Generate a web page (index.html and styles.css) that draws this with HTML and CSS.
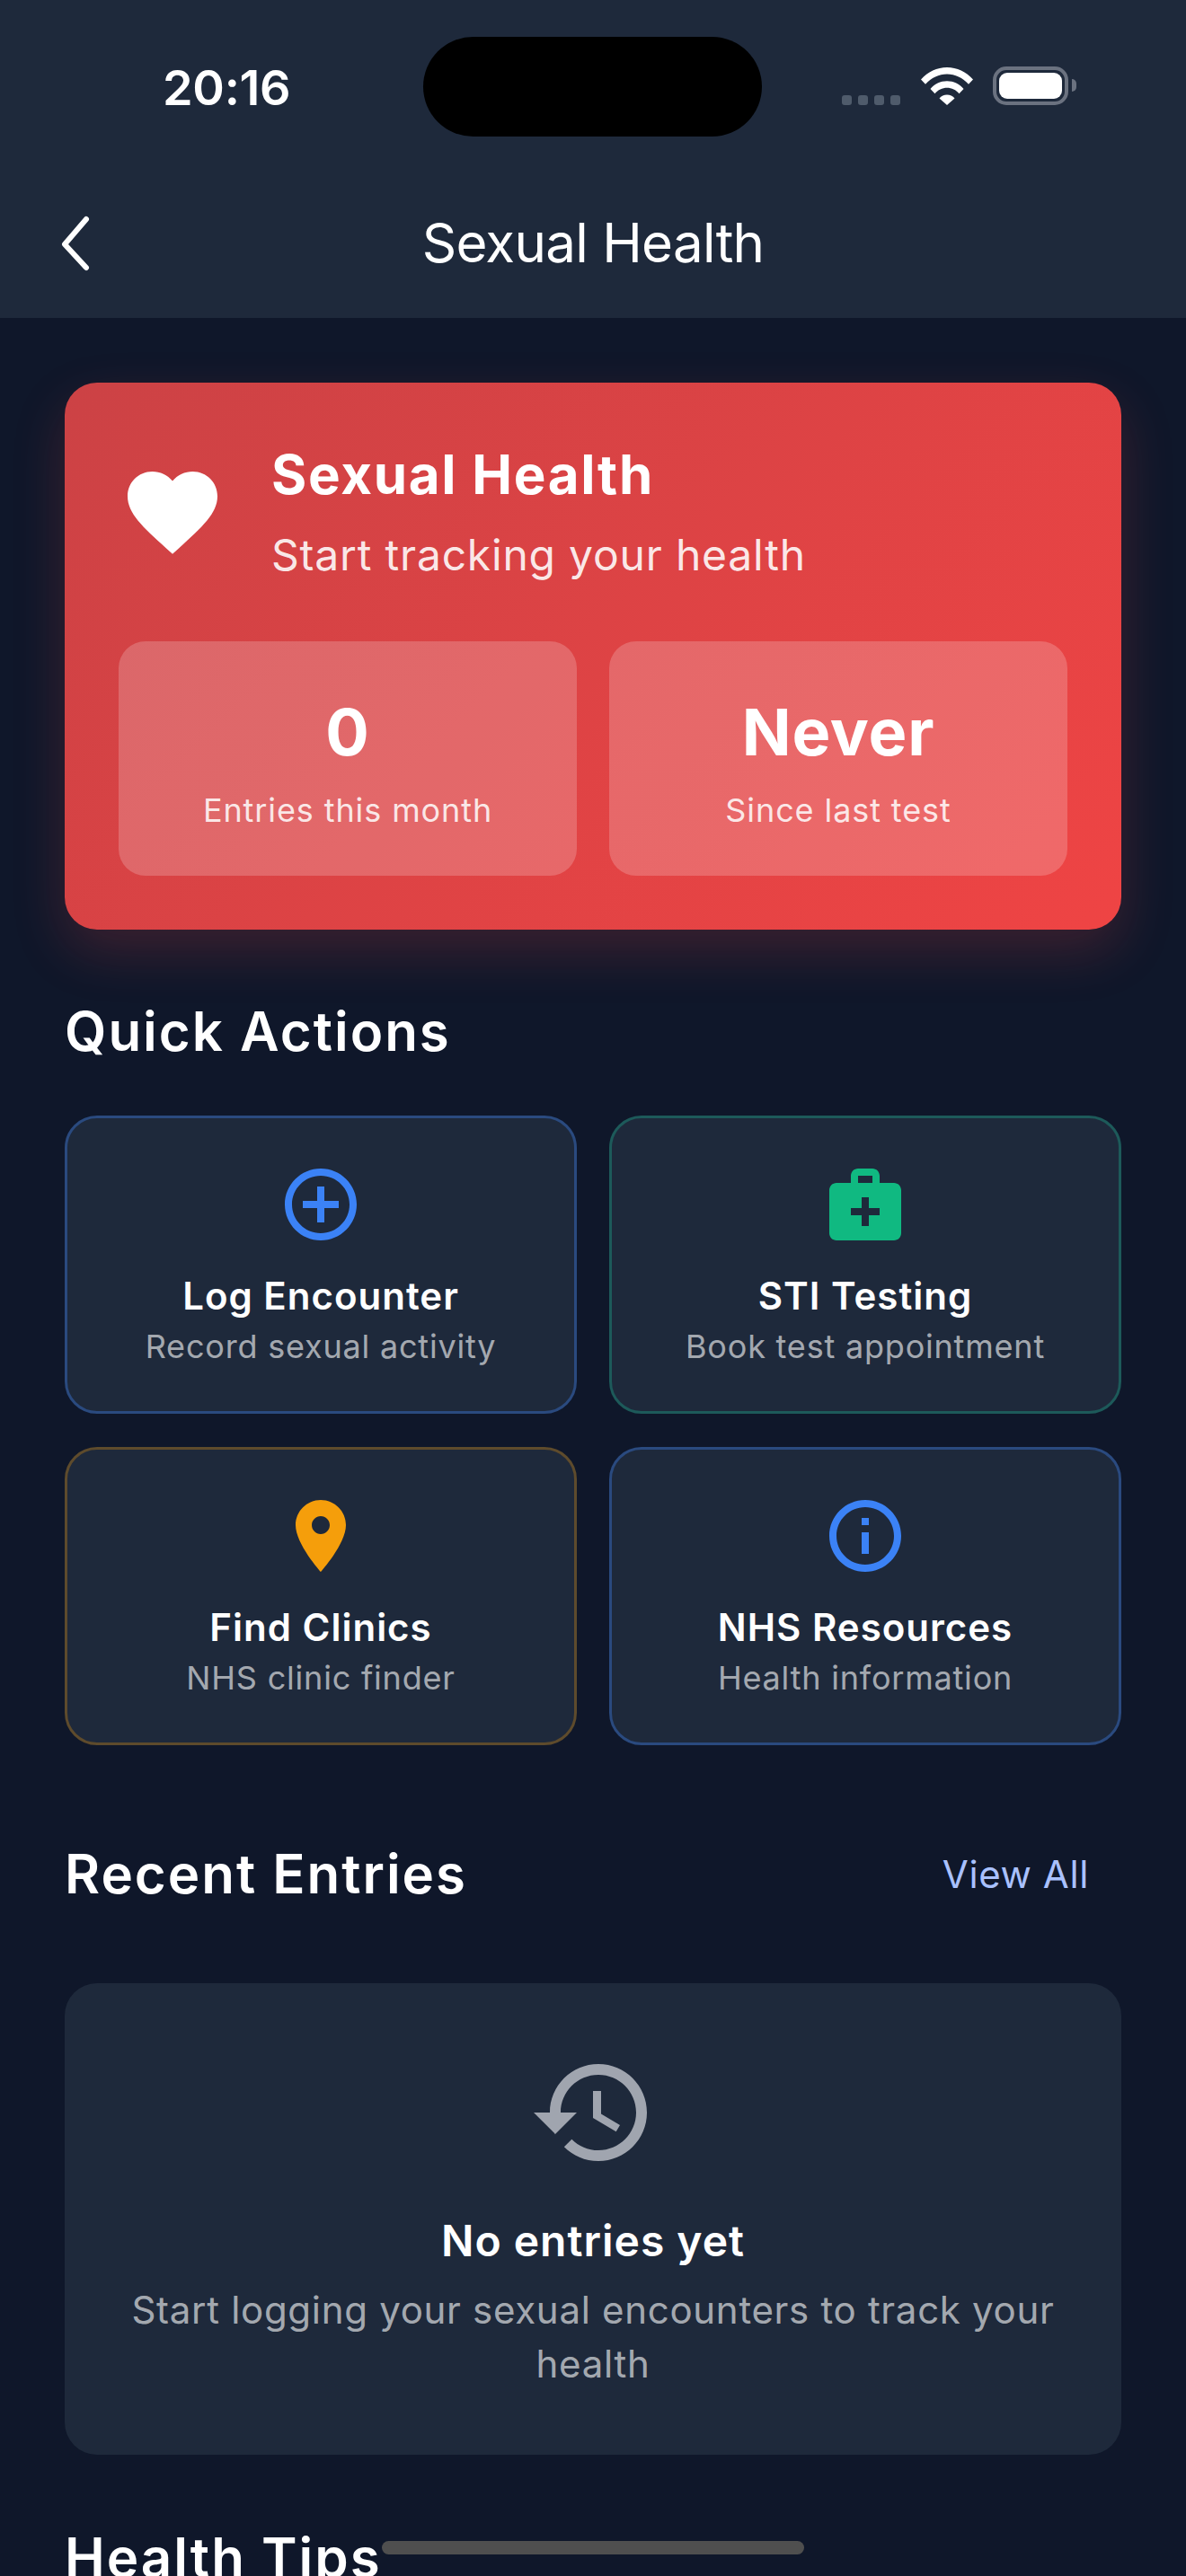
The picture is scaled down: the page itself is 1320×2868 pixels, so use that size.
FILE: index.html
```html
<!DOCTYPE html>
<html lang="en">
<head>
    <meta charset="UTF-8">
    <meta name="viewport" content="width=device-width, initial-scale=1.0">
    <title>Sexual Health</title>
    <link rel="stylesheet" href="styles.css">
</head>
<body>

    <header class="header">
        <div class="status-bar">
            <span class="time">20:16</span>
            <div class="status-icons">
                <div class="signal"><i></i><i></i><i></i><i></i></div>
                <svg class="wifi" viewBox="0 0 58 42">
                    <path fill="#fff" d="M0 13.500C7.500 5 18 0 29 0s21.500 5 29 13.500l-5 5.200C46.500 11.500 38 7.500 29 7.500S11.500 11.500 5 18.700z"/>
                    <path fill="#fff" d="M10.500 24C15 18.500 21.800 15.200 29 15.200S43 18.500 47.500 24l-5 5.200C39 25.200 34.200 22.800 29 22.800s-10 2.400-13.500 6.400z"/>
                    <path fill="#fff" d="M20.500 34.500C22.500 32 25.600 30.500 29 30.500s6.500 1.500 8.500 4L29 42z"/>
                </svg>
                <div class="battery"><div class="battery-fill"></div></div>
                <div class="battery-cap"></div>
            </div>
        </div>
        <div class="nav-bar">
            <svg class="back" viewBox="0 0 40 64">
                <polyline points="33,6 9,34 33,60" fill="none" stroke="#fff" stroke-width="6" stroke-linecap="round" stroke-linejoin="round"/>
            </svg>
            <h1 class="nav-title">Sexual Health</h1>
        </div>
    </header>
    <div class="island"></div>

    <main class="content">
        <section class="hero">
            <div class="hero-top">
                <svg class="hero-heart" viewBox="0 0 24 24"><path fill="#fff" d="M12 21.350l-1.450-1.320C5.400 15.360 2 12.280 2 8.500 2 5.420 4.420 3 7.500 3c1.740 0 3.410.81 4.500 2.090C13.090 3.810 14.760 3 16.500 3 19.580 3 22 5.420 22 8.500c0 3.780-3.400 6.860-8.550 11.540L12 21.350z"/></svg>
                <div>
                    <h2 class="hero-title">Sexual Health</h2>
                    <p class="hero-sub">Start tracking your health</p>
                </div>
            </div>
            <div class="stats">
                <div class="stat">
                    <div class="stat-value">0</div>
                    <div class="stat-label">Entries this month</div>
                </div>
                <div class="stat">
                    <div class="stat-value">Never</div>
                    <div class="stat-label">Since last test</div>
                </div>
            </div>
        </section>

        <h2 class="section-title quick-title">Quick Actions</h2>
        <div class="actions">
            <div class="action action-blue">
                <svg class="action-icon" viewBox="0 0 24 24"><path fill="#3b82f6" d="M13 7h-2v4H7v2h4v4h2v-4h4v-2h-4V7zm-1-5C6.480 2 2 6.480 2 12s4.480 10 10 10 10-4.480 10-10S17.520 2 12 2zm0 18c-4.410 0-8-3.590-8-8s3.590-8 8-8 8 3.590 8 8-3.590 8-8 8z"/></svg>
                <div class="action-title">Log Encounter</div>
                <div class="action-sub">Record sexual activity</div>
            </div>
            <div class="action action-green">
                <svg class="action-icon" viewBox="0 0 24 24"><path fill="#10b981" d="M20 6h-4V4c0-1.100-.9-2-2-2h-4c-1.100 0-2 .9-2 2v2H4c-1.100 0-2 .9-2 2v12c0 1.100.9 2 2 2h16c1.100 0 2-.9 2-2V8c0-1.100-.9-2-2-2zM10 4h4v2h-4V4zm6 11h-3v3h-2v-3H8v-2h3v-3h2v3h3v2z"/></svg>
                <div class="action-title">STI Testing</div>
                <div class="action-sub">Book test appointment</div>
            </div>
            <div class="action action-orange">
                <svg class="action-icon" viewBox="0 0 24 24"><path fill="#f59e0b" d="M12 2C8.130 2 5 5.130 5 9c0 5.250 7 13 7 13s7-7.750 7-13c0-3.870-3.130-7-7-7zm0 9.500c-1.380 0-2.500-1.120-2.500-2.500s1.120-2.500 2.500-2.500 2.500 1.120 2.500 2.500-1.120 2.500-2.500 2.500z"/></svg>
                <div class="action-title">Find Clinics</div>
                <div class="action-sub">NHS clinic finder</div>
            </div>
            <div class="action action-blue">
                <svg class="action-icon" viewBox="0 0 24 24"><path fill="#3b82f6" d="M11 7h2v2h-2zm0 4h2v6h-2zm1-9C6.480 2 2 6.480 2 12s4.480 10 10 10 10-4.480 10-10S17.520 2 12 2zm0 18c-4.410 0-8-3.590-8-8s3.590-8 8-8 8 3.590 8 8-3.590 8-8 8z"/></svg>
                <div class="action-title">NHS Resources</div>
                <div class="action-sub">Health information</div>
            </div>
        </div>

        <div class="section-head">
            <h2 class="section-title">Recent Entries</h2>
            <span class="view-all">View All</span>
        </div>
        <div class="empty">
            <svg class="empty-icon" viewBox="0 0 24 24"><path fill="#a0a5af" d="M13 3c-4.970 0-9 4.030-9 9H1l3.890 3.890.07.14L9 12H6c0-3.870 3.130-7 7-7s7 3.130 7 7-3.130 7-7 7c-1.930 0-3.680-.79-4.940-2.060l-1.420 1.420C8.270 19.990 10.510 21 13 21c4.970 0 9-4.030 9-9s-4.030-9-9-9zm-1 5v5l4.280 2.540.72-1.210-3.500-2.080V8H12z"/></svg>
            <div class="empty-title">No entries yet</div>
            <p class="empty-sub">Start logging your sexual encounters to track your health</p>
        </div>

        <h2 class="section-title tips-title">Health Tips</h2>
    </main>

    <div class="home-indicator"></div>

</body>
</html>
```

FILE: styles.css
```css
* {
    box-sizing: border-box;
    margin: 0;
    padding: 0;
}

html, body {
    width: 1320px;
    height: 2868px;
    overflow: hidden;
}

body {
    position: relative;
    background: #0f172a;
    color: #fff;
    font-family: Inter, "Noto Sans", sans-serif;
}

/* header */
.header {
    height: 354px;
    background: #1e293b;
}

.status-bar {
    height: 186px;
    display: flex;
    justify-content: space-between;
    padding: 68px 122px 0 181px;
}

.time {
    font-size: 54px;
    line-height: 60px;
    font-weight: 600;
    letter-spacing: -0.3px;
}

.status-icons {
    display: flex;
    align-items: flex-start;
    height: 60px;
    padding-top: 7px;
}

.signal {
    display: flex;
    gap: 7px;
    margin-top: 31px;
    width: 88px;
}

.signal i {
    display: block;
    width: 11px;
    height: 11px;
    border-radius: 3px;
    background: #4f5b6b;
}

.wifi {
    width: 58px;
    height: 42px;
}

.battery {
    width: 84px;
    height: 43px;
    margin-left: 22px;
    border: 4px solid #6b7280;
    border-radius: 15px;
    padding: 3px;
    margin-top: -1px;
}

.battery-fill {
    width: 100%;
    height: 100%;
    background: #fff;
    border-radius: 9px;
}

.battery-cap {
    width: 5px;
    height: 14px;
    margin-top: 13px;
    margin-left: 4px;
    background: #6b7280;
    border-radius: 0 5px 5px 0;
}

.island {
    position: absolute;
    top: 41px;
    left: 471px;
    width: 377px;
    height: 111px;
    background: #000;
    border-radius: 56px;
}

.nav-bar {
    position: relative;
    height: 168px;
    display: flex;
    justify-content: center;
    padding-top: 48px;
}

.back {
    position: absolute;
    left: 63px;
    top: 52px;
    width: 40px;
    height: 64px;
}

.nav-title {
    font-size: 60px;
    line-height: 72px;
    font-weight: 400;
    letter-spacing: -0.7px;
}

/* page content */
.content {
    padding: 72px 72px 0;
}

.hero {
    height: 609px;
    padding: 60px;
    border-radius: 36px;
    background: linear-gradient(135deg, #cc4245, #ef4444);
    box-shadow: 0 24px 60px rgba(239, 68, 68, 0.2);
}

.hero-top {
    height: 168px;
    margin-bottom: 60px;
    display: flex;
    align-items: center;
    gap: 50px;
}

.hero-heart {
    width: 120px;
    height: 120px;
    flex: none;
}

.hero-title {
    font-size: 60px;
    line-height: 72px;
    font-weight: 700;
    letter-spacing: 1.7px;
}

.hero-sub {
    margin-top: 24px;
    font-size: 48px;
    line-height: 60px;
    letter-spacing: 0.8px;
    color: rgba(255, 255, 255, 0.9);
}

.stats {
    display: grid;
    grid-template-columns: 1fr 1fr;
    gap: 36px;
}

.stat {
    height: 261px;
    padding-top: 57px;
    border-radius: 30px;
    background: rgba(255, 255, 255, 0.2);
    text-align: center;
}

.stat-value {
    font-size: 72px;
    line-height: 88px;
    font-weight: 700;
    letter-spacing: 0.8px;
}

.stat-label {
    margin-top: 21px;
    font-size: 36px;
    line-height: 44px;
    letter-spacing: 0.9px;
    color: rgba(255, 255, 255, 0.85);
}

.section-title {
    font-size: 60px;
    line-height: 72px;
    font-weight: 600;
    letter-spacing: 2px;
}

.quick-title {
    margin-top: 77px;
}

.actions {
    display: grid;
    grid-template-columns: 570px 570px;
    gap: 37px 36px;
    margin-top: 58px;
}

.action {
    height: 332px;
    padding-top: 48px;
    border: 3px solid;
    border-radius: 36px;
    background: #1e293b;
    text-align: center;
}

.action-blue {
    border-color: #2a4a7f;
}

.action-green {
    border-color: #1d5a5a;
}

.action-orange {
    border-color: #5e4b2c;
}

.action-icon {
    display: block;
    width: 96px;
    height: 96px;
    margin: 0 auto;
}

.action-title {
    margin-top: 28px;
    font-size: 42px;
    line-height: 52px;
    font-weight: 600;
    letter-spacing: 1px;
}

.action-sub {
    margin-top: 8px;
    font-size: 36px;
    line-height: 44px;
    letter-spacing: 0.8px;
    color: rgba(255, 255, 255, 0.62);
}

.section-head {
    display: flex;
    justify-content: space-between;
    align-items: center;
    margin-top: 107px;
    padding-right: 36px;
}

.view-all {
    font-size: 42px;
    letter-spacing: 0.6px;
    color: #a9c1ff;
}

.empty {
    height: 525px;
    margin-top: 86px;
    padding: 72px 48px 0;
    border-radius: 36px;
    background: #1e293b;
    text-align: center;
}

.empty-icon {
    display: block;
    width: 144px;
    height: 144px;
    margin: 0 auto;
}

.empty-title {
    margin-top: 41px;
    font-size: 48px;
    line-height: 60px;
    font-weight: 600;
    letter-spacing: 1px;
}

.empty-sub {
    margin-top: 17px;
    font-size: 42px;
    line-height: 60px;
    letter-spacing: 0.7px;
    color: rgba(255, 255, 255, 0.62);
}

.tips-title {
    margin-top: 78px;
}

.home-indicator {
    position: absolute;
    left: 425px;
    top: 2829px;
    width: 470px;
    height: 15px;
    border-radius: 8px;
    background: #4f4f4f;
}
```
